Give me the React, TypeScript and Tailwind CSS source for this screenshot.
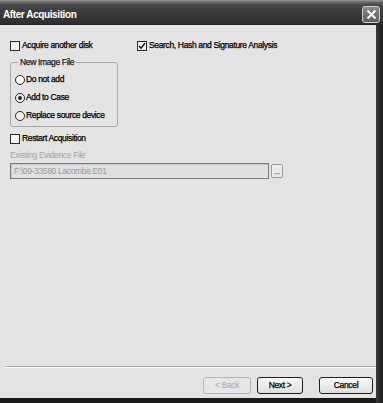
import React from "react";

const font = "font-['Liberation_Sans',Arial,sans-serif]";

function Check({ checked }: { checked?: boolean }) {
  return (
    <span className="w-[10px] h-[10px] border border-[#2a2a2a] bg-[#f4f4f4] flex items-center justify-center shrink-0">
      {checked && (
        <svg width="8" height="8" viewBox="0 0 8 8">
          <path d="M1 4 L3 6.2 L7 1.2" stroke="#111" strokeWidth="1.4" fill="none" />
        </svg>
      )}
    </span>
  );
}

function Radio({ checked }: { checked?: boolean }) {
  return (
    <span className="w-[10px] h-[10px] rounded-full border border-[#2a2a2a] bg-[#f4f4f4] flex items-center justify-center shrink-0">
      {checked && <span className="w-[4px] h-[4px] rounded-full bg-[#222]" />}
    </span>
  );
}

export default function App() {
  return (
    <div className={`w-[383px] h-[403px] flex flex-col bg-[#1c1c1c] overflow-hidden ${font} text-[8.5px] tracking-[-0.35px] text-black [-webkit-text-stroke:0.25px]`}>
      {/* title bar */}
      <div className="h-[25px] shrink-0 flex items-center justify-between bg-[linear-gradient(to_bottom,#9a9a9a_0px,#6a6a6a_2px,#474747_5px,#3a3a3a_14px,#2e2e2e_24px,#1e1e1e_25px)]">
        <span className="ml-[3px] mt-[3px] text-white font-bold text-[10px] tracking-[-0.4px] [-webkit-text-stroke:0px]">After Acquisition</span>
        <div className="mr-[3px] mt-[4px] w-[18px] h-[17px] rounded-[3px] border border-[#d0d0d0] bg-[linear-gradient(to_bottom,#8a8a8a,#5e5e5e)] flex items-center justify-center">
          <svg width="11" height="11" viewBox="0 0 11 11">
            <path d="M1.5 1.5 L9.5 9.5 M9.5 1.5 L1.5 9.5" stroke="#fff" strokeWidth="1.8" />
          </svg>
        </div>
      </div>
      <div className="flex-1 flex">
        <div className="flex-1 flex flex-col">
          <div className="flex-1 flex flex-col bg-[#e3e3e3]">
            <div className="flex flex-col pl-[10px] pt-[15px]">
              <div className="flex items-center h-[11px]">
                <div className="w-[127px] flex items-center gap-[2px]">
                  <Check />
                  <span>Acquire another disk</span>
                </div>
                <div className="flex items-center gap-[2px]">
                  <Check checked />
                  <span>Search, Hash and Signature Analysis</span>
                </div>
              </div>
              <fieldset className="mt-[6px] w-[108px] h-[70px] border border-[#a8a8a8] rounded-[3px] pl-[4px] pt-[7px] flex flex-col gap-[7px]">
                <legend className="ml-[3px] px-[2px] text-[#222] leading-[10px]">New Image File</legend>
                <div className="flex items-center gap-[1px] h-[11px]">
                  <Radio />
                  <span>Do not add</span>
                </div>
                <div className="flex items-center gap-[1px] h-[11px]">
                  <Radio checked />
                  <span>Add to Case</span>
                </div>
                <div className="flex items-center gap-[1px] h-[11px]">
                  <Radio />
                  <span>Replace source device</span>
                </div>
              </fieldset>
              <div className="mt-[6px] flex items-center gap-[2px] h-[11px]">
                <Check />
                <span>Restart Acquisition</span>
              </div>
              <div className="mt-[6px] text-[#a4a4a4] leading-[10px] [-webkit-text-stroke:0px]">Existing Evidence File</div>
              <div className="mt-[3px] flex items-center gap-[2px]">
                <div className="w-[259px] h-[16px] border border-[#7a7a7a] bg-[#e0e0e0] flex items-center pl-[3px] text-[#9a9a9a] [-webkit-text-stroke:0px] shadow-[inset_1px_1px_0_#c8c8c8]">
                  F:\09-33580 Lacombe.E01
                </div>
                <div className="w-[12px] h-[14px] border border-[#9a9a9a] rounded-[2px] bg-[#ececec] flex items-end justify-center text-[#888] leading-[10px] pb-[1px]">
                  ...
                </div>
              </div>
            </div>
            <div className="flex-1" />
            <div className="ml-[5px] h-[2px] border-t border-[#acacac] bg-[#f8f8f8]" />
            <div className="mt-[9px] mb-[4px] flex justify-end pr-[3px] h-[17px]">
              <div className="w-[48px] rounded-[3px] border border-[#b4b4b4] bg-[#e6e6e6] flex items-center justify-center text-[#a8a8a8] [-webkit-text-stroke:0px]">
                &lt; Back
              </div>
              <div className="ml-[6px] w-[46px] rounded-[3px] border-[1.5px] border-[#1e1e1e] bg-[linear-gradient(to_bottom,#fafafa,#dedede)] flex items-center justify-center">
                Next &gt;
              </div>
              <div className="ml-[16px] w-[54px] rounded-[3px] border-[1.5px] border-[#1e1e1e] bg-[linear-gradient(to_bottom,#fafafa,#dedede)] flex items-center justify-center">
                Cancel
              </div>
            </div>
          </div>
          <div className="h-[5px] shrink-0 bg-[#1a1a1a]" />
        </div>
        <div className="w-[7px] shrink-0 bg-[linear-gradient(to_right,#3a3a3a,#1c1c1c)]" />
      </div>
    </div>
  );
}
